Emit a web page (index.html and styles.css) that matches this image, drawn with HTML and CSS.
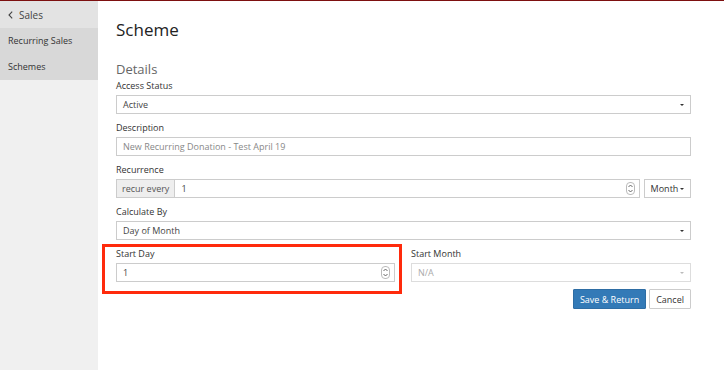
FILE: index.html
```html
<!DOCTYPE html>
<html lang="en">
<head>
    <meta charset="UTF-8">
    <meta name="viewport" content="width=device-width, initial-scale=1.0">
    <title>Scheme</title>
    <link rel="stylesheet" href="styles.css">
</head>
<body>
    <div class="page">
        <div class="sidebar">
            <div class="side-back">
                <svg class="chev" width="5" height="8" viewBox="0 0 5 8"><path d="M4.2 0.6 L1 4 L4.2 7.4" fill="none" stroke="#444" stroke-width="1.1"/></svg>
                Sales
            </div>
            <div class="side-item">Recurring Sales</div>
            <div class="side-item">Schemes</div>
        </div>

        <div class="main">
            <h1>Scheme</h1>
            <h2>Details</h2>

            <div class="group">
                <label>Access Status</label>
                <div class="control select">
                    <span>Active</span>
                    <span class="caret"></span>
                </div>
            </div>

            <div class="group">
                <label>Description</label>
                <div class="control">
                    <span class="muted">New Recurring Donation - Test April 19</span>
                </div>
            </div>

            <div class="group">
                <label>Recurrence</label>
                <div class="input-row">
                    <div class="addon">recur every</div>
                    <div class="control number">
                        <span>1</span>
                        <span class="spin">
                            <svg width="7" height="11" viewBox="0 0 7 11"><path d="M1.5 4 L3.5 2 L5.5 4 M1.5 7 L3.5 9 L5.5 7" fill="none" stroke="#555" stroke-width="0.9"/></svg>
                        </span>
                    </div>
                    <div class="dropbtn">Month<span class="caret small"></span></div>
                </div>
            </div>

            <div class="group">
                <label>Calculate By</label>
                <div class="control select">
                    <span>Day of Month</span>
                    <span class="caret"></span>
                </div>
            </div>

            <div class="two-col">
                <div class="group highlight-wrap">
                    <label>Start Day</label>
                    <div class="control number">
                        <span>1</span>
                        <span class="spin">
                            <svg width="7" height="11" viewBox="0 0 7 11"><path d="M1.5 4 L3.5 2 L5.5 4 M1.5 7 L3.5 9 L5.5 7" fill="none" stroke="#555" stroke-width="0.9"/></svg>
                        </span>
                    </div>
                    <div class="highlight"></div>
                </div>
                <div class="group">
                    <label>Start Month</label>
                    <div class="control select disabled">
                        <span>N/A</span>
                        <span class="caret light"></span>
                    </div>
                </div>
            </div>

            <div class="actions">
                <button class="btn primary">Save &amp; Return</button>
                <button class="btn">Cancel</button>
            </div>
        </div>
    </div>
</body>
</html>
```

FILE: styles.css
```css
* {
    box-sizing: border-box;
    font-family: "Open Sans", "Liberation Sans", sans-serif;
}
html, body {
    margin: 0;
    height: 100%;
}
body {
    background: #fff;
    color: #333;
    border-top: 1px solid #7d1010;
}
.page {
    display: flex;
    height: 100%;
}
.sidebar {
    width: 98px;
    flex-shrink: 0;
    background: #f0f0f0;
    font-size: 9px;
}
.side-back {
    display: flex;
    align-items: center;
    height: 27px;
    padding-left: 8px;
    background: #e3e3e3;
    color: #444;
    font-size: 10px;
}
.chev {
    margin-right: 6px;
}
.side-item {
    height: 26px;
    line-height: 26px;
    padding-left: 8px;
    background: #d8d8d8;
    color: #333;
}
.main {
    flex: 1;
    padding: 18px 33px 0 18px;
}
h1 {
    margin: 0 0 20px;
    font-size: 17px;
    line-height: 22px;
    font-weight: 400;
    color: #222;
}
h2 {
    margin: 0 0 3px;
    font-size: 13px;
    line-height: 16px;
    font-weight: 400;
    color: #666;
}
.group {
    margin-bottom: 8px;
}
label {
    display: block;
    font-size: 9px;
    line-height: 12px;
    margin-bottom: 3px;
    color: #333;
}
.control {
    display: flex;
    align-items: center;
    justify-content: space-between;
    height: 19px;
    padding: 0 6px;
    border: 1px solid #ccc;
    background: #fff;
    font-size: 9px;
    color: #444;
}
.muted {
    color: #888;
}
.caret {
    width: 0;
    height: 0;
    border-left: 2.5px solid transparent;
    border-right: 2.5px solid transparent;
    border-top: 2.5px solid #333;
}
.caret.small {
    display: inline-block;
    margin-left: 2px;
    vertical-align: middle;
}
.caret.light {
    border-top-color: #bbb;
}
.disabled {
    color: #aaa;
    border-color: #ddd;
}
.spin {
    display: flex;
    align-items: center;
    justify-content: center;
    width: 9px;
    height: 13px;
    border: 1px solid #bbb;
    border-radius: 4px;
    margin-right: -2px;
}
.input-row {
    display: flex;
    align-items: stretch;
}
.addon {
    display: flex;
    align-items: center;
    padding: 0 5px;
    height: 19px;
    background: #eee;
    border: 1px solid #ccc;
    border-right: 0;
    font-size: 9px;
    color: #555;
}
.input-row .control {
    flex: 1;
}
.dropbtn {
    margin-left: 4px;
    width: 47px;
    height: 19px;
    border: 1px solid #ccc;
    display: flex;
    align-items: center;
    justify-content: center;
    font-size: 9px;
    color: #333;
}
.two-col {
    display: grid;
    grid-template-columns: 279px 1fr;
    column-gap: 16px;
}
.two-col .group {
    margin-bottom: 0;
}
.highlight-wrap {
    position: relative;
}
.highlight {
    position: absolute;
    left: -14px;
    right: -7px;
    top: -4px;
    bottom: -12px;
    border: 3px solid #ff2a0c;
}
.actions {
    display: flex;
    justify-content: flex-end;
    gap: 3px;
    margin-top: 7px;
}
.btn {
    height: 20px;
    padding: 0 6px;
    font-size: 9px;
    border: 1px solid #ccc;
    background: #fff;
    color: #333;
    border-radius: 1px;
}
.btn.primary {
    background: #337ab7;
    border-color: #2e6da4;
    color: #fff;
}
```
